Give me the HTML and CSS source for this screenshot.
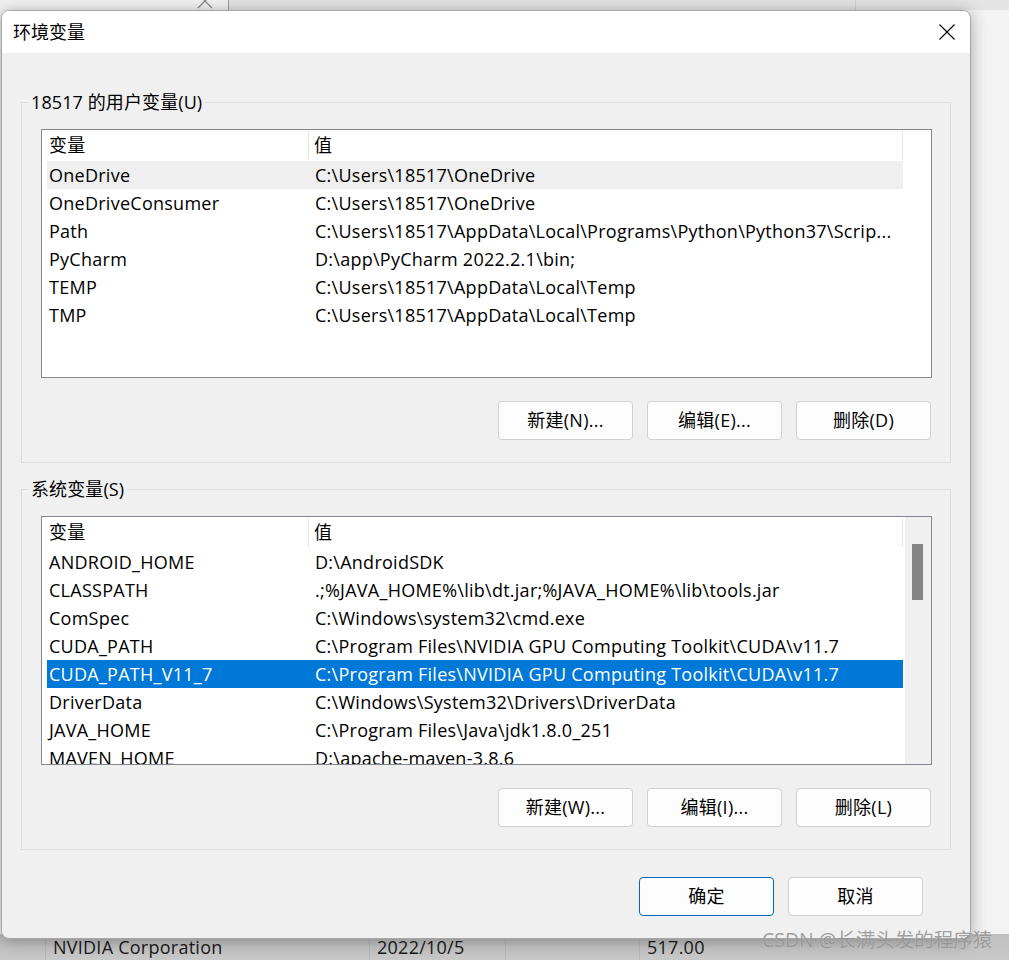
FILE: index.html
```html
<!DOCTYPE html>
<html lang="zh-CN">
<head>
<meta charset="utf-8">
<title>环境变量</title>
<link rel="stylesheet" href="styles.css">
</head>
<body>
<div class="desktop">
  <div class="behind-top">
    <div class="bt-seg bt-left">
      <svg class="bt-x" width="16" height="16" viewBox="0 0 16 16"><path d="M1 1L15 15M15 1L1 15"/></svg>
    </div>
    <div class="bt-line"></div>
    <div class="bt-seg bt-mid"></div>
    <div class="bt-line bt-line-faint"></div>
    <div class="bt-seg bt-mid"></div>
  </div>
  <div class="behind-mid"></div>
  <div class="behind-row">
    <div class="bcell"></div>
    <div class="bcell">NVIDIA Corporation</div>
    <div class="bcell">2022/10/5</div>
    <div class="bcell"></div>
    <div class="bcell">517.00</div>
  </div>
</div>

<div class="dialog">
  <div class="titlebar">
    <span class="title">环境变量</span>
    <svg class="close" width="16" height="16" viewBox="0 0 16 16"><path d="M0.5 0.5L15.5 15.5M15.5 0.5L0.5 15.5"/></svg>
  </div>
  <div class="dialog-body">
    <fieldset class="group">
      <legend>18517 的用户变量(U)</legend>
      <div class="group-inner">
        <div class="list">
          <div class="list-main">
            <div class="list-head"><div class="hcell">变量</div><div class="hcell hval">值</div></div>
            <div class="row hover"><div class="cell">OneDrive</div><div class="cell val">C:\Users\18517\OneDrive</div></div>
            <div class="row"><div class="cell">OneDriveConsumer</div><div class="cell val">C:\Users\18517\OneDrive</div></div>
            <div class="row"><div class="cell">Path</div><div class="cell val">C:\Users\18517\AppData\Local\Programs\Python\Python37\Scrip...</div></div>
            <div class="row"><div class="cell">PyCharm</div><div class="cell val">D:\app\PyCharm 2022.2.1\bin;</div></div>
            <div class="row"><div class="cell">TEMP</div><div class="cell val">C:\Users\18517\AppData\Local\Temp</div></div>
            <div class="row"><div class="cell">TMP</div><div class="cell val">C:\Users\18517\AppData\Local\Temp</div></div>
          </div>
          <div class="scroll-blank"></div>
        </div>
        <div class="btn-row">
          <button class="btn">新建(N)...</button>
          <button class="btn">编辑(E)...</button>
          <button class="btn">删除(D)</button>
        </div>
      </div>
    </fieldset>

    <fieldset class="group group-sys">
      <legend>系统变量(S)</legend>
      <div class="group-inner">
        <div class="list">
          <div class="list-main">
            <div class="list-head"><div class="hcell">变量</div><div class="hcell hval">值</div></div>
            <div class="row"><div class="cell">ANDROID_HOME</div><div class="cell val">D:\AndroidSDK</div></div>
            <div class="row"><div class="cell">CLASSPATH</div><div class="cell val">.;%JAVA_HOME%\lib\dt.jar;%JAVA_HOME%\lib\tools.jar</div></div>
            <div class="row"><div class="cell">ComSpec</div><div class="cell val">C:\Windows\system32\cmd.exe</div></div>
            <div class="row"><div class="cell">CUDA_PATH</div><div class="cell val">C:\Program Files\NVIDIA GPU Computing Toolkit\CUDA\v11.7</div></div>
            <div class="row selected"><div class="cell">CUDA_PATH_V11_7</div><div class="cell val">C:\Program Files\NVIDIA GPU Computing Toolkit\CUDA\v11.7</div></div>
            <div class="row"><div class="cell">DriverData</div><div class="cell val">C:\Windows\System32\Drivers\DriverData</div></div>
            <div class="row"><div class="cell">JAVA_HOME</div><div class="cell val">C:\Program Files\Java\jdk1.8.0_251</div></div>
            <div class="row"><div class="cell">MAVEN_HOME</div><div class="cell val">D:\apache-maven-3.8.6</div></div>
          </div>
          <div class="scrollbar"><div class="thumb"></div></div>
        </div>
        <div class="btn-row">
          <button class="btn">新建(W)...</button>
          <button class="btn">编辑(I)...</button>
          <button class="btn">删除(L)</button>
        </div>
      </div>
    </fieldset>

    <div class="footer">
      <button class="btn default">确定</button>
      <button class="btn">取消</button>
    </div>
  </div>
</div>

<div class="watermark">CSDN @长满头发的程序猿</div>
</body>
</html>
```

FILE: styles.css
```css
* { box-sizing: border-box; }
html, body { margin: 0; padding: 0; }
body {
  width: 1009px;
  height: 960px;
  overflow: hidden;
  position: relative;
  font-family: "Open Sans", "Noto Sans CJK SC", sans-serif;
  font-size: 18px;
  color: #000;
  background: #f4f4f4;
}

/* background window */
.desktop {
  height: 960px;
  display: flex;
  flex-direction: column;
}
.behind-top {
  height: 10px;
  display: grid;
  grid-template-columns: 228px 1px 626px 1px 1fr;
  background: #e6e6e6;
  overflow: hidden;
}
.bt-left { background: #f2f2f2; padding-left: 197px; }
.bt-x { display: block; margin-top: -7px; fill: none; stroke: #8a8a8a; stroke-width: 1.3; }
.bt-mid { background: #e4e4e4; }
.bt-line { background: #9c9c9c; }
.bt-line-faint { background: #d2d2d2; }
.behind-mid { flex: 1; background: #f3f3f3; }
.behind-row {
  height: 26px;
  display: grid;
  grid-template-columns: 45px 324px 136px 134px 1fr;
  background: linear-gradient(to bottom, #c0c0c0, #c8c8c8);
  line-height: 26px;
  color: #1a1a1a;
  letter-spacing: 0.25px;
}
.bcell { border-left: 1px solid #b4b8bf; padding-left: 7px; white-space: nowrap; }
.bcell:first-child { border-left: none; }

/* dialog */
.dialog {
  position: absolute;
  left: 1px;
  top: 10px;
  width: 970px;
  height: 929px;
  border: 1px solid #a6a6a6;
  border-radius: 8px;
  overflow: hidden;
  background: #f0f0f0;
  box-shadow: 0 2px 16px rgba(0, 0, 0, 0.32);
  letter-spacing: 0.26px;
}
.titlebar {
  height: 42px;
  background: #ffffff;
  display: flex;
  align-items: center;
  justify-content: space-between;
  padding: 0 15px 0 11px;
}
.title { font-size: 18px; line-height: 24px; letter-spacing: 0; }
.close { display: block; fill: none; stroke: #000; stroke-width: 1.1; }

.dialog-body {
  padding: 37px 19px 0 19px;
}
.group {
  margin: 0;
  padding: 0;
  border: 1px solid #dcdcdc;
  min-width: 0;
}
.group-sys { margin-top: 14px; }
.group legend {
  margin-left: 6px;
  padding: 0 3px;
  font-size: 18px;
  line-height: 24px;
  letter-spacing: 0.1px;
}
.group-inner {
  padding: 15px 18px 22px 19px;
}

.list {
  height: 249px;
  border: 1px solid #828790;
  background: #ffffff;
  display: flex;
  overflow: hidden;
}
.list-main {
  flex: 1;
  overflow: hidden;
  padding-left: 5px;
}
.scroll-blank { width: 26px; }
.scrollbar {
  width: 26px;
  background: #f0f0f0;
  padding-top: 27px;
}
.thumb {
  margin-left: 7px;
  width: 11px;
  height: 56px;
  background: #858585;
}

.list-head, .row {
  width: 856px;
  display: grid;
  grid-template-columns: 262px 594px;
}
.list-head {
  height: 31px;
  padding: 1px 0;
}
.hcell {
  line-height: 29px;
  padding-left: 2px;
  border-right: 1px solid #e5e5e5;
  white-space: nowrap;
}
.hcell.hval { padding-left: 5px; }
.row {
  height: 28px;
  line-height: 28px;
}
.cell {
  padding-left: 2px;
  white-space: nowrap;
  overflow: hidden;
}
.cell.val { padding-left: 6px; }
.row.hover { background: #efefef; }
.row.selected { background: #0078d7; color: #ffffff; }

.btn-row {
  margin-top: 23px;
  display: flex;
  justify-content: flex-end;
  gap: 14px;
  padding-right: 1px;
}
.btn {
  width: 135px;
  height: 39px;
  padding: 0;
  margin: 0;
  border: 1px solid #d0d0d0;
  border-radius: 4px;
  background: #fdfdfd;
  font-family: inherit;
  font-size: 18px;
  line-height: 37px;
  letter-spacing: 0.26px;
  color: #000;
}
.btn.default { border-color: #0067c0; }

.footer {
  margin-top: 27px;
  display: flex;
  justify-content: flex-end;
  gap: 14px;
  padding-right: 28px;
}

.watermark {
  position: absolute;
  left: 762px;
  top: 927px;
  font-size: 19.5px;
  line-height: 26px;
  color: rgba(135, 135, 135, 0.8);
  text-shadow: 0 0 1px rgba(255, 255, 255, 0.5);
  white-space: nowrap;
}
```
